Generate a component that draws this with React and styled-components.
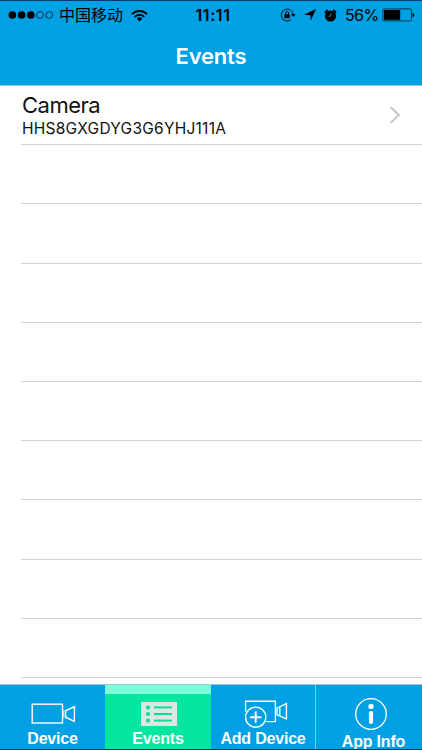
import React, { useState } from 'react';
import styled, { createGlobalStyle } from 'styled-components';

const events = [{ id: 'HHS8GXGDYG3G6YHJ111A', name: 'Camera' }];
const rowCount = 10;

const DeviceIcon = () => (
  <svg width="46" height="22" viewBox="0 0 46 22" fill="none" stroke="#fff" strokeWidth="1.4">
    <rect x="1.2" y="1.2" width="30.3" height="18.8" />
    <path d="M34.6 7.8v6.4l8.8 4.2V3.6z" />
    <path d="M32.8 7.4v7.2" strokeWidth="1" />
  </svg>
);

const ListIcon = () => (
  <svg width="36" height="24" viewBox="0 0 36 24">
    <rect width="36" height="24" fill="#d9e9e2" />
    <g fill="#06df9b">
      <circle cx="7" cy="5.5" r="2.1" />
      <circle cx="7" cy="12" r="2.1" />
      <circle cx="7" cy="18.6" r="2.1" />
      <rect x="13" y="4.4" width="18" height="2" />
      <rect x="13" y="11" width="18" height="2" />
      <rect x="13" y="17.6" width="18" height="2" />
    </g>
  </svg>
);

const AddDeviceIcon = () => (
  <svg width="44" height="28" viewBox="0 0 44 28" fill="none" stroke="#fff" strokeWidth="1.4">
    <path d="M1.6 11.5V1.2h29.8v20.4h-9" />
    <circle cx="11.7" cy="17.2" r="10.1" />
    <path d="M11.7 11.6v11.2M6.1 17.2h11.2" strokeWidth="1.9" />
    <path d="M33 8.2v6.6l9.4 4.2V3.6zM35.8 7.4v8" />
  </svg>
);

const InfoIcon = () => (
  <svg width="34" height="34" viewBox="0 0 34 34" fill="none">
    <circle cx="17" cy="17" r="15.3" stroke="#fff" strokeWidth="1.3" />
    <circle cx="17" cy="9.4" r="2.6" fill="#fff" />
    <path d="M17 16.2v8.8" stroke="#fff" strokeWidth="4.2" strokeLinecap="round" />
  </svg>
);

const tabs = [
  { label: 'Device', Icon: DeviceIcon, iconShift: 3 },
  { label: 'Events', Icon: ListIcon, iconShift: 2 },
  { label: 'Add Device', Icon: AddDeviceIcon, iconShift: 6 },
  { label: 'App Info', Icon: InfoIcon, iconShift: 4, labelShift: 9 }
];

const SignalIcon = () => (
  <svg width="46" height="10" viewBox="0 0 46 10">
    <circle cx="4.4" cy="5" r="3.8" />
    <circle cx="13.7" cy="5" r="3.8" />
    <circle cx="22.8" cy="5" r="3.8" />
    <circle cx="32" cy="5" r="3.4" fill="none" stroke="#000" strokeWidth="0.7" />
    <circle cx="41.2" cy="5" r="3.4" fill="none" stroke="#000" strokeWidth="0.7" />
  </svg>
);

const WifiIcon = () => (
  <svg width="17" height="13" viewBox="0 0 17 13" fill="none" stroke="#000" strokeWidth="1.9">
    <path d="M1 5.1a10.6 10.6 0 0 1 15 0" />
    <path d="M3.7 7.9a6.8 6.8 0 0 1 9.6 0" />
    <path d="M8.5 12.4L5.8 9.7a3.8 3.8 0 0 1 5.4 0z" fill="#000" stroke="none" />
  </svg>
);

const LockIcon = () => (
  <svg width="16" height="14" viewBox="0 0 16 14" fill="none" stroke="#000">
    <path d="M11.2 11.6a6 6 0 1 1 2-5.4" strokeWidth="0.9" />
    <path d="M10.9 6h4.7l-2.3 3z" fill="#000" stroke="none" />
    <rect x="4.4" y="6.2" width="5.3" height="4" fill="#000" stroke="none" />
    <path d="M5.5 6.4V5.2a1.6 1.6 0 0 1 3.2 0v1.2" strokeWidth="1" />
  </svg>
);

const LocationIcon = () => (
  <svg width="12" height="12" viewBox="0 0 12 12">
    <path d="M12 0L6.6 12V6.3L0 5.7z" />
  </svg>
);

const AlarmIcon = () => (
  <svg width="13" height="13" viewBox="0 0 13 13">
    <circle cx="6.5" cy="7" r="5.6" />
    <path d="M0.9 3.5L3.8 1M9.2 1l2.9 2.5" stroke="#000" strokeWidth="1.7" />
    <path d="M6.7 4.2v3H4.4" stroke="#00a0e4" strokeWidth="0.8" fill="none" />
  </svg>
);

const BatteryIcon = () => (
  <svg width="33" height="14" viewBox="0 0 33 14">
    <rect x="0.9" y="0.9" width="28.6" height="12" rx="1.6" fill="none" stroke="#000" strokeWidth="0.7" />
    <rect x="2" y="2" width="16.2" height="9.8" />
    <path d="M30.6 4.8a2.3 2.3 0 0 1 0 4.4z" />
  </svg>
);

const App = () => {
  const [activeTab, setActiveTab] = useState('Events');

  return (
    <Screen>
      <GlobalStyle />
      <Header>
        <StatusBar>
          <Carrier>
            <SignalIcon />
            <CarrierName>中国移动</CarrierName>
            <WifiIcon />
          </Carrier>
          <Clock>11:11</Clock>
          <StatusIcons>
            <LockIcon />
            <LocationIcon />
            <AlarmIcon />
            <Percent>56%</Percent>
            <BatteryIcon />
          </StatusIcons>
        </StatusBar>
        <Title>Events</Title>
      </Header>
      <List>
        {Array.from({ length: rowCount }, (_, index) => {
          const event = events[index];
          return (
            <Row key={index}>
              {event && (
                <>
                  <RowText>
                    <CameraName>{event.name}</CameraName>
                    <CameraId>{event.id}</CameraId>
                  </RowText>
                  <svg width="12" height="18" viewBox="0 0 12 18" fill="none" stroke="#c7c7cc" strokeWidth="2.2">
                    <path d="M1.8 1.2L9.8 9l-8 7.8" />
                  </svg>
                </>
              )}
            </Row>
          );
        })}
      </List>
      <TabBar>
        {tabs.map(({ label, Icon, iconShift, labelShift }) => (
          <Tab
            key={label}
            type="button"
            $active={activeTab === label}
            $divider={label === 'App Info'}
            onClick={() => setActiveTab(label)}
          >
            <IconBox $shift={iconShift} $low={label === 'App Info'}>
              <Icon />
            </IconBox>
            <TabLabel $shift={labelShift}>{label}</TabLabel>
          </Tab>
        ))}
      </TabBar>
    </Screen>
  );
};

const GlobalStyle = createGlobalStyle`
  * {
    box-sizing: border-box;
  }

  body {
    margin: 0;
    background: #fff;
    font-family: Inter, "Noto Sans CJK SC", sans-serif;
  }

  svg {
    display: block;
    flex-shrink: 0;
  }
`;

const Screen = styled.div`
  display: flex;
  flex-direction: column;
  height: 750px;
  width: 422px;
  overflow: hidden;
  background: #fff;
  border-bottom: 1px solid #063a66;
`;

const Header = styled.header`
  height: 86px;
  flex-shrink: 0;
  background: #00a0e4;
  border-top: 1px solid #063a66;
  border-bottom: 1px solid #9cc5dc;
`;

const StatusBar = styled.div`
  display: grid;
  grid-template-columns: 1fr auto 1fr;
  align-items: center;
  height: 28px;
  padding: 0 7px 0 8px;
  color: #000;
`;

const Carrier = styled.div`
  display: flex;
  align-items: center;
`;

const CarrierName = styled.span`
  margin: -2px 8px 0 5px;
  font-family: "Noto Sans CJK SC", sans-serif;
  font-size: 16px;
  line-height: 20px;
`;

const Clock = styled.span`
  padding-left: 3px;
  font-size: 16px;
  font-weight: 600;
  letter-spacing: 0.6px;
`;

const StatusIcons = styled.div`
  display: flex;
  align-items: center;
  justify-content: flex-end;
  gap: 8px;
`;

const Percent = styled.span`
  font-size: 16px;
  letter-spacing: -0.6px;
  margin-right: -4.5px;
`;

const Title = styled.h1`
  margin: 0;
  color: #fff;
  font-size: 22px;
  font-weight: 600;
  letter-spacing: -0.2px;
  line-height: 55px;
  text-align: center;
`;

const List = styled.main`
  flex: 1;
  min-height: 0;
  margin-left: 21px;
`;

const Row = styled.div`
  display: flex;
  align-items: center;
  justify-content: space-between;
  height: 59.2px;
  padding-right: 21px;
  border-bottom: 1px solid #d3d3d7;
`;

const RowText = styled.div`
  display: flex;
  flex-direction: column;
  padding-left: 1px;
`;

const CameraName = styled.span`
  color: #111;
  font-size: 22px;
  letter-spacing: -0.5px;
  line-height: 26px;
`;

const CameraId = styled.span`
  color: #111;
  font-size: 15.5px;
  letter-spacing: 0.25px;
  line-height: 21px;
`;

const TabBar = styled.nav`
  display: grid;
  grid-template-columns: 105px 106px 104px 107px;
  height: 65px;
  flex-shrink: 0;
  border-top: 1px solid #9cc5dc;
`;

const Tab = styled.button`
  display: flex;
  flex-direction: column;
  align-items: center;
  min-width: 0;
  padding: ${({ $active }) => ($active ? '0' : '9px')} 0 0;
  border: 0;
  border-top: ${({ $active }) => ($active ? '9px solid #7affd7' : '0')};
  border-left: ${({ $divider }) => ($divider ? '1px solid #80cff1' : '0')};
  background: ${({ $active }) => ($active ? '#04e69f' : '#00a0e4')};
  color: #fff;
  overflow: hidden;
  cursor: pointer;
`;

const IconBox = styled.div`
  display: flex;
  align-items: center;
  justify-content: center;
  height: ${({ $low }) => ($low ? '39px' : '36px')};
  padding-top: ${({ $low }) => ($low ? '1px' : '3px')};
  padding-left: ${({ $shift }) => $shift || 0}px;
  flex-shrink: 0;
`;

const TabLabel = styled.span`
  padding-left: ${({ $shift }) => $shift || 0}px;
  font-family: "Liberation Sans", Arial, sans-serif;
  font-size: 16px;
  font-weight: bold;
  letter-spacing: -0.2px;
  line-height: 18px;
  white-space: nowrap;
`;

export default App;
